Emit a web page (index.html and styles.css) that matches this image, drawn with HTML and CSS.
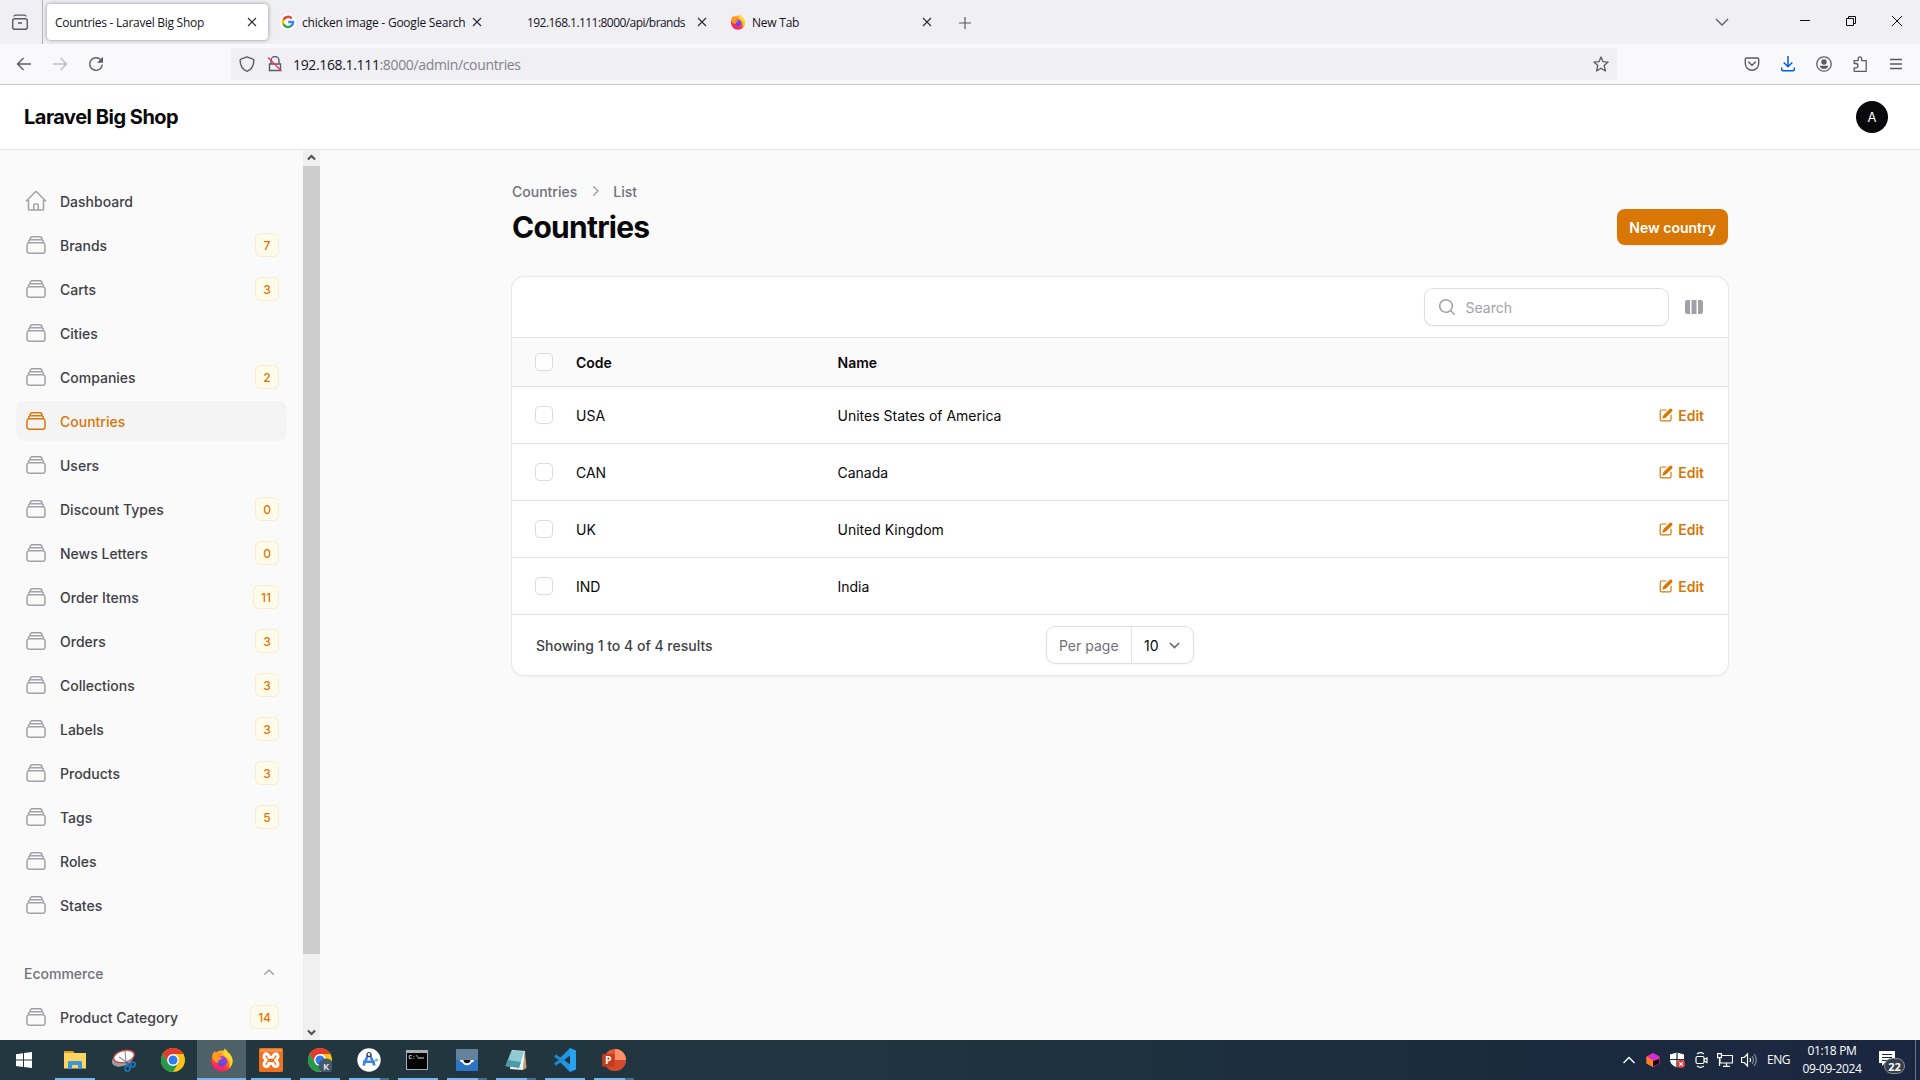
FILE: index.html
```html
<!DOCTYPE html>
<html lang="en">
<head>
<meta charset="utf-8">
<title>Countries - Laravel Big Shop</title>
<link rel="stylesheet" href="styles.css">
</head>
<body>
<svg class="defs" aria-hidden="true">
  <symbol id="stack" viewBox="0 0 24 24"><path fill="none" stroke="currentColor" stroke-width="1.5" stroke-linecap="round" stroke-linejoin="round" d="M6 6.878V6a2.25 2.25 0 0 1 2.25-2.25h7.5A2.25 2.25 0 0 1 18 6v.878m-12 0c.235-.083.487-.128.75-.128h10.5c.263 0 .515.045.75.128m-12 0A2.25 2.25 0 0 0 4.5 9v.878m13.5-3A2.25 2.25 0 0 1 19.5 9v.878m0 0a2.246 2.246 0 0 0-.75-.128H5.25c-.263 0-.515.045-.75.128m15 0A2.25 2.25 0 0 1 21 12v6a2.25 2.25 0 0 1-2.25 2.25H5.25A2.25 2.25 0 0 1 3 18v-6c0-.98.626-1.813 1.5-2.122"/></symbol>
  <symbol id="home" viewBox="0 0 24 24"><path fill="none" stroke="currentColor" stroke-width="1.5" stroke-linecap="round" stroke-linejoin="round" d="m2.25 12 8.954-8.955c.44-.439 1.152-.439 1.591 0L21.75 12M4.5 9.75v10.125c0 .621.504 1.125 1.125 1.125H9.75v-4.875c0-.621.504-1.125 1.125-1.125h2.25c.621 0 1.125.504 1.125 1.125V21h4.125c.621 0 1.125-.504 1.125-1.125V9.75M8.25 21h8.25"/></symbol>
  <symbol id="edit" viewBox="0 0 20 20"><path fill="currentColor" d="m5.433 13.917 1.262-3.155A4 4 0 0 1 7.58 9.42l6.92-6.918a2.121 2.121 0 0 1 3 3l-6.92 6.918c-.383.383-.84.685-1.343.886l-3.154 1.262a.5.5 0 0 1-.65-.65Z"/><path fill="currentColor" d="M3.5 5.75c0-.69.56-1.25 1.25-1.25H10A.75.75 0 0 0 10 3H4.75A2.75 2.75 0 0 0 2 5.75v9.5A2.75 2.75 0 0 0 4.75 18h9.5A2.75 2.75 0 0 0 17 15.25V10a.75.75 0 0 0-1.5 0v5.25c0 .69-.56 1.25-1.25 1.25h-9.5c-.69 0-1.25-.56-1.25-1.25v-9.5Z"/></symbol>
  <symbol id="close" viewBox="0 0 16 16"><path fill="none" stroke="#2b2a33" stroke-width="1.1" d="M4 4l8 8M12 4l-8 8"/></symbol>
  <symbol id="firefox" viewBox="0 0 24 24">
    <circle cx="12" cy="13" r="10.6" fill="url(#ffBody)"/>
    <path fill="#ffe226" d="M14.500.5c2.300 1.300 3.300 3 3.800 4.600 2.500 1.600 4.300 4.700 4.300 8 0 3-1.300 5.800-3.500 7.700 1.300-5.500-.2-10-4-11.800C13 7.500 13 3.500 14.500.5z" opacity=".85"/>
    <circle cx="12" cy="13.300" r="5.200" fill="url(#ffCore)"/>
    <path fill="#ff9a1f" d="M2 8.500C2.300 6 3.500 4 5.200 2.800c0 1.200.4 2 1.200 2.500 1.700-.4 3.400-.1 4.700.8-2.200.5-2.900 1.800-2.700 3l3.800.5c-.2 1.400-1.500 1.800-2.600 2.200-1.100.5-1.400 1.500-1 2.800C6 15.500 3 13 2 8.500z"/>
  </symbol>
  <symbol id="chrome" viewBox="0 0 24 24">
    <circle cx="12" cy="12" r="12" fill="#fbc116"/>
    <path fill="#e33b2e" d="M1.600 6A12 12 0 0 1 22.400 6H12v6L6.800 15z"/>
    <path fill="#229a4c" d="M1.600 6A12 12 0 0 0 12 24l5.200-9L12 12l-5.200 3z"/>
    <circle cx="12" cy="12" r="5.900" fill="#fff"/><circle cx="12" cy="12" r="4.500" fill="#2f7cf0"/>
  </symbol>
  <linearGradient id="ffBody" x1=".8" y1="0" x2=".3" y2="1"><stop offset="0" stop-color="#ffd43a"/><stop offset=".45" stop-color="#ff7a1f"/><stop offset=".75" stop-color="#ff3050"/><stop offset="1" stop-color="#f0187c"/></linearGradient>
  <linearGradient id="ffCore" x1="0" y1="0" x2="0" y2="1"><stop offset="0" stop-color="#a23ee8"/><stop offset="1" stop-color="#5a4ad9"/></linearGradient>
</svg>

<div class="tabbar">
  <div class="tabs-archive"><svg width="20" height="20" viewBox="0 0 20 20" fill="none" stroke="#5b5b66" stroke-width="1.400"><rect x="2.700" y="6.700" width="14.600" height="10.600" rx="2"/><path d="M4 4.600c0-1 .8-1.500 1.600-1.500h8.800c.8 0 1.600.5 1.600 1.500M8 11h4"/></svg></div>
  <div class="tab tab-active"><span class="tab-title t1">Countries - Laravel Big Shop</span><svg class="tab-close"><use href="#close"/></svg></div>
  <div class="tab"><svg class="tab-icon" viewBox="0 0 16 16"><circle cx="8" cy="8" r="8" fill="#fff"/><g fill="none" stroke-width="2.500"><path stroke="#ea4335" d="M3.500 5.700A5 5 0 0 1 11.700 4.500"/><path stroke="#fbbc05" d="M3.500 10.400a5 5 0 0 1 0-4.800"/><path stroke="#34a853" d="M11.400 11.700a5 5 0 0 1-7.900-1.400"/><path stroke="#4285f4" d="M8.200 8h4.900c.1 1.500-.5 2.800-1.800 3.800"/></g></svg><span class="tab-title t2">chicken image - Google Search</span><svg class="tab-close"><use href="#close"/></svg></div>
  <div class="tab"><span class="tab-icon"></span><span class="tab-title t3">192.168.1.111:8000/api/brands</span><svg class="tab-close"><use href="#close"/></svg></div>
  <div class="tab"><svg class="tab-icon"><use href="#firefox"/></svg><span class="tab-title t4">New Tab</span><svg class="tab-close"><use href="#close"/></svg></div>
  <div class="new-tab"><svg width="14" height="14" viewBox="0 0 14 14"><path stroke="#5b5b66" stroke-width="1.200" d="M7 1v12M1 7h12"/></svg></div>
  <div class="window-controls">
    <span class="wc-list"><svg width="14" height="14" viewBox="0 0 14 14"><path fill="none" stroke="#5b5b66" stroke-width="1.300" d="M1 4l6 6 6-6"/></svg></span>
    <span class="wc"><svg width="12" height="12" viewBox="0 0 12 12"><path stroke="#111" d="M1 5.500h10"/></svg></span>
    <span class="wc"><svg width="12" height="12" viewBox="0 0 12 12" fill="none" stroke="#111"><path d="M1.500 3.500h7v7h-7zM3.500 3.500v-2h7v7h-2"/></svg></span>
    <span class="wc"><svg width="12" height="12" viewBox="0 0 12 12"><path stroke="#111" d="M1 1l10 10M11 1L1 11"/></svg></span>
  </div>
</div>

<div class="navbar">
  <div class="nav-buttons">
    <svg viewBox="0 0 16 16"><path fill="none" stroke="#5b5b66" stroke-width="1.400" d="M15 8H1.500M7.500 2l-6 6 6 6"/></svg>
    <svg viewBox="0 0 16 16"><path fill="none" stroke="#bdbdc4" stroke-width="1.400" d="M1 8h13.500M8.500 2l6 6-6 6"/></svg>
    <svg viewBox="0 0 16 16"><path fill="none" stroke="#5b5b66" stroke-width="1.400" d="M14.300 8.500A6.300 6.300 0 1 1 12.500 3.600"/><path fill="#5b5b66" d="M15 .8v6H9z"/></svg>
  </div>
  <div class="urlbar">
    <svg class="i16" viewBox="0 0 16 16"><path fill="none" stroke="#5b5b66" stroke-width="1.400" stroke-linejoin="round" d="M8 .9l6 2.200c.6.200.9.600.9 1.100C14.800 10 12.500 13.500 8 15.300 3.500 13.500 1.200 10 1.100 4.200c0-.5.3-.9.900-1.100z"/></svg>
    <svg class="i16 lock" viewBox="0 0 16 16"><path fill="none" stroke="#5b5b66" stroke-width="1.400" d="M4 8V4.500a4 4 0 0 1 8 0V8M2.500 8h11v6.500h-11z"/><path stroke="#e8325c" stroke-width="1.300" d="M1 1.500l13.500 13.500"/></svg>
    <span class="url"><b>192.168.1.111</b>:8000/admin/countries</span>
    <svg class="i16 star" viewBox="0 0 16 16"><path fill="none" stroke="#5b5b66" stroke-width="1.300" stroke-linejoin="round" d="M8 1l2 4.700 5.100.4-3.900 3.400L12.400 15 8 12.200 3.600 15l1.200-5.500L.9 6.100 6 5.700z"/></svg>
  </div>
  <div class="nav-actions">
    <svg viewBox="0 0 16 16" fill="none" stroke="#5b5b66" stroke-width="1.400"><path d="M2.500 2h11c.7 0 1.200.500 1.200 1.200V7.500a6.700 6.700 0 0 1-13.400 0V3.200C1.300 2.500 1.800 2 2.500 2z"/><path d="M4.600 6L8 9.200 11.400 6" stroke-linecap="round"/></svg>
    <svg viewBox="0 0 16 16" fill="none" stroke="#0060df" stroke-width="1.500"><path d="M8 0v10.500M3.700 6.500L8 10.700l4.300-4.200M1.700 11.500v2c0 .7.500 1.200 1.200 1.200h10.200c.7 0 1.200-.5 1.200-1.200v-2"/></svg>
    <svg viewBox="0 0 16 16"><circle cx="8" cy="8" r="7.200" fill="none" stroke="#5b5b66" stroke-width="1.300"/><circle cx="8" cy="6" r="2.700" fill="#5b5b66"/><path fill="#5b5b66" d="M3.800 9.700h8.400c0 2-2 3.300-4.200 3.300s-4.200-1.300-4.200-3.300z"/></svg>
    <svg viewBox="0 0 16 16"><path fill="none" stroke="#5b5b66" stroke-width="1.300" stroke-linejoin="round" d="M2.200 7.500V4.600h4V2.500a1.700 1.700 0 0 1 3.400 0v2.100h4.600v10.700h-12v-3.500h1.600a2.100 2.100 0 0 0 0-4.300z"/></svg>
    <svg viewBox="0 0 16 16"><path stroke="#5b5b66" stroke-width="1.300" d="M2 3.500h12M2 8h12M2 12.500h12"/></svg>
  </div>
</div>

<header class="topbar"><span class="brand">Laravel Big Shop</span><span class="avatar">A</span></header>

<div class="layout">
  <aside class="sidebar">
    <nav class="menu">
      <ul>
        <li><svg><use href="#home"/></svg><span>Dashboard</span></li>
        <li><svg><use href="#stack"/></svg><span>Brands</span><em>7</em></li>
        <li><svg><use href="#stack"/></svg><span>Carts</span><em>3</em></li>
        <li><svg><use href="#stack"/></svg><span>Cities</span></li>
        <li><svg><use href="#stack"/></svg><span>Companies</span><em>2</em></li>
        <li class="active"><svg><use href="#stack"/></svg><span>Countries</span></li>
        <li><svg><use href="#stack"/></svg><span>Users</span></li>
        <li><svg><use href="#stack"/></svg><span>Discount Types</span><em>0</em></li>
        <li><svg><use href="#stack"/></svg><span>News Letters</span><em>0</em></li>
        <li><svg><use href="#stack"/></svg><span>Order Items</span><em>11</em></li>
        <li><svg><use href="#stack"/></svg><span>Orders</span><em>3</em></li>
        <li><svg><use href="#stack"/></svg><span>Collections</span><em>3</em></li>
        <li><svg><use href="#stack"/></svg><span>Labels</span><em>3</em></li>
        <li><svg><use href="#stack"/></svg><span>Products</span><em>3</em></li>
        <li><svg><use href="#stack"/></svg><span>Tags</span><em>5</em></li>
        <li><svg><use href="#stack"/></svg><span>Roles</span></li>
        <li><svg><use href="#stack"/></svg><span>States</span></li>
      </ul>
      <div class="group">
        <div class="group-label"><span>Ecommerce</span><svg viewBox="0 0 20 20"><path fill="#a1a1aa" d="M9.470 6.470a.75.75 0 0 1 1.060 0l4.250 4.250a.75.75 0 1 1-1.060 1.060L10 8.060l-3.720 3.720a.75.75 0 0 1-1.060-1.060l4.250-4.250Z"/></svg></div>
        <ul><li><svg><use href="#stack"/></svg><span>Product Category</span><em>14</em></li></ul>
      </div>
    </nav>
    <div class="scrollbar">
      <svg viewBox="0 0 17 17"><path fill="none" stroke="#505050" stroke-width="2.200" d="M4.700 10.200l3.800-3.800 3.800 3.800"/></svg>
      <div class="thumb"></div>
      <svg viewBox="0 0 17 17"><path fill="none" stroke="#505050" stroke-width="2.200" d="M4.700 6.800l3.800 3.800 3.800-3.800"/></svg>
    </div>
  </aside>

  <main class="main">
    <div class="page-header">
      <div>
        <div class="breadcrumbs"><span>Countries</span><svg viewBox="0 0 20 20"><path fill="#a1a1aa" d="M8.220 5.220a.75.75 0 0 1 1.060 0l4.250 4.250a.75.75 0 0 1 0 1.060l-4.250 4.250a.75.75 0 0 1-1.060-1.060L11.940 10 8.220 6.280a.75.75 0 0 1 0-1.060Z"/></svg><span>List</span></div>
        <h1>Countries</h1>
      </div>
      <button class="primary">New country</button>
    </div>

    <section class="card">
      <div class="toolbar">
        <div class="search"><svg viewBox="0 0 20 20"><path fill="#a1a1aa" fill-rule="evenodd" d="M9 3.500a5.500 5.500 0 1 0 0 11 5.500 5.500 0 0 0 0-11ZM2 9a7 7 0 1 1 12.452 4.391l3.328 3.329a.75.75 0 1 1-1.060 1.060l-3.329-3.328A7 7 0 0 1 2 9Z"/></svg><span>Search</span></div>
        <svg class="columns" viewBox="0 0 20 20"><path fill="#a1a1aa" d="M14 17h2.750A2.250 2.250 0 0 0 19 14.750v-9.500A2.250 2.250 0 0 0 16.750 3H14v14ZM12.500 3h-5v14h5V3ZM3.250 3H6v14H3.250A2.250 2.250 0 0 1 1 14.750v-9.500A2.250 2.250 0 0 1 3.250 3Z"/></svg>
      </div>
      <div class="row head"><i class="check"></i><span>Code</span><span>Name</span></div>
      <div class="row"><i class="check"></i><span>USA</span><span>Unites States of America</span><a><svg><use href="#edit"/></svg><span>Edit</span></a></div>
      <div class="row"><i class="check"></i><span>CAN</span><span>Canada</span><a><svg><use href="#edit"/></svg><span>Edit</span></a></div>
      <div class="row"><i class="check"></i><span>UK</span><span>United Kingdom</span><a><svg><use href="#edit"/></svg><span>Edit</span></a></div>
      <div class="row"><i class="check"></i><span>IND</span><span>India</span><a><svg><use href="#edit"/></svg><span>Edit</span></a></div>
      <div class="footer">
        <span class="summary">Showing 1 to 4 of 4 results</span>
        <div class="per-page"><span class="label">Per page</span><span class="value">10<svg viewBox="0 0 20 20"><path fill="none" stroke="#6b7280" stroke-width="1.500" stroke-linecap="round" stroke-linejoin="round" d="m6 8 4 4 4-4"/></svg></span></div>
      </div>
    </section>
  </main>
</div>

<div class="taskbar">
  <div class="task plain"><svg width="16" height="16" viewBox="0 0 16 16"><path fill="#fff" d="M0 2.200l7-1v6.400H0zM8 1.100L16 0v7.600H8zM0 8.500h7v6.400l-7-1zM8 8.500h8V16l-8-1.100z"/></svg></div>
  <div class="task open"><svg viewBox="0 0 24 24"><path fill="#e3a21a" d="M1 3h9l2 2.500H1z"/><path fill="#fcd462" d="M1 5h22v15.500H1z"/><path fill="#3b97dc" d="M5 14.500c0-1 .6-1.500 1.500-1.500h11c.9 0 1.500.5 1.500 1.500V21h-4v-4H9v4H5z"/></svg></div>
  <div class="task"><svg viewBox="0 0 24 24"><ellipse cx="10.500" cy="11.500" rx="11" ry="6.500" fill="#9a9fa5" transform="rotate(-20 10.500 11.500)"/><ellipse cx="12" cy="8.500" rx="10.500" ry="5.800" fill="#fff" stroke="#d84a44" stroke-width="1.400" transform="rotate(-14 12 8.500)"/><path stroke="#8a949c" stroke-width="1.200" d="M13 3l1 12M7 9l9 6"/><g fill="none" stroke="#1b76bd" stroke-width="1.700"><circle cx="15.500" cy="20.500" r="2.500"/><circle cx="20.800" cy="16.500" r="2.300"/><path d="M15.500 18l-.5-4M18.500 16l-5-1"/></g></svg></div>
  <div class="task"><svg><use href="#chrome"/></svg></div>
  <div class="task current"><svg><use href="#firefox"/></svg></div>
  <div class="task open"><svg viewBox="0 0 24 24"><rect width="24" height="24" rx="1.500" fill="#ef701d"/><path fill="#f6a268" d="M1 1h22v3H1z" opacity=".6"/><path fill="none" stroke="#fff" stroke-width="3" stroke-linejoin="round" d="M10 9.300C9.500 4.700 5 5 5 8.600c0 2.200 2 2.700 2.300 3.700C7 13.300 5 14 5 16c0 3.600 4.500 3.500 5-.5h4c.5 4 5 4 5 .5 0-2-2-2.700-2.300-3.700.3-1 2.300-1.500 2.300-3.700 0-3.600-4.500-3.900-5 .7z"/></svg></div>
  <div class="task open"><svg viewBox="0 0 24 24"><use href="#chrome" width="24" height="24"/><circle cx="18" cy="18" r="7.500" fill="#45596a"/><text x="18" y="21.500" class="badge-k">K</text></svg></div>
  <div class="task open multi"><svg viewBox="0 0 24 24"><circle cx="12" cy="12" r="11.700" fill="#fff"/><path fill="none" stroke="#3f82ee" stroke-width="2.600" d="M11 7L6.500 17.500M13 7l4.500 10.500M6 13.800h12"/><circle cx="12" cy="6.500" r="2" fill="#fff" stroke="#263a4a" stroke-width="1.200"/><circle cx="19.500" cy="12" r="1.500" fill="#58d17e"/></svg></div>
  <div class="task open"><svg viewBox="0 0 24 24"><path fill="#a9afb3" d="M0 2h22v20H0z"/><path fill="#050505" d="M1 5h20v16H1z"/><text x="2.500" y="10.500" class="prompt">C:\</text><path stroke="#ddd" d="M13 10h5"/></svg></div>
  <div class="task open multi"><svg viewBox="0 0 24 24"><path fill="#64839a" d="M1 1h22v12H1z"/><path fill="#2b74c6" d="M1 12h22v11H1z"/><path fill="#fff" d="M5 12h14c0 2.400-2 2-2.500 2.600C15.500 18 8.500 18 7.500 14.600 7 14 5 14.400 5 12z"/><path fill="#10151a" d="M8.500 12h7c0 4.300-7 4.300-7 0z"/></svg></div>
  <div class="task open multi"><svg viewBox="0 0 24 24"><path fill="#cda262" d="M21 4l1.500 16-3.500 2z"/><path fill="#eef2f2" d="M8 2l13 1-2 19-13-1z"/><path fill="#8fc9d3" d="M7.500 2.500L20 3.500 15 20 1.500 18z"/><path fill="#4c9aa8" d="M4 12l13 2-2 6-13.500-2z"/></svg></div>
  <div class="task open"><svg viewBox="0 0 24 24"><path fill="none" stroke="#1c86cf" stroke-width="3" stroke-linejoin="round" d="M18 19L2 7.500M18 5L2 16.500"/><path fill="#2196e0" d="M17 0L6 11l3 2.500L17 7zM17 24L6 13l3-2.500L17 17z"/><path fill="#28a2ec" d="M17 0l6 2.500v19L17 24z"/></svg></div>
  <div class="task open multi"><svg viewBox="0 0 24 24"><circle cx="13" cy="12" r="11" fill="#e1593a"/><path fill="#ff8f6b" d="M13 1a11 11 0 0 1 11 11H13z"/><path fill="#c93f20" d="M2 12h22a11 11 0 0 1-22 0z" opacity=".55"/><rect y="6" width="12.500" height="12.500" rx="1" fill="#c33b1d"/><text x="6.200" y="16" class="ppt">P</text></svg></div>
  <div class="tray">
    <span class="tray-i"><svg viewBox="0 0 16 16"><path fill="none" stroke="#fff" stroke-width="1.400" d="M2.500 11L8 5.500l5.500 5.500"/></svg></span>
    <span class="tray-i"><svg viewBox="0 0 16 16"><path fill="#ff318c" d="M8 1l6.500 3.500v7L8 15l-6.500-3.500v-7z"/><path fill="#fd8224" d="M1.500 4.500L8 8v7l-6.500-3.500z"/><path fill="#b72bff" d="M8 1l6.500 3.500L8 8 4 6z" opacity=".75"/><path fill="#0b0b10" d="M8 9l6-2v4.500L8 14.500z"/></svg></span>
    <span class="tray-i"><svg viewBox="0 0 16 16"><path fill="#fff" d="M1 2.500L8 .5l7 2v5c0 4-3 6.500-7 8-4-1.500-7-4-7-8z"/><path stroke="#1c2a42" stroke-width="1.200" d="M8 0v16M0 7.500h16"/><circle cx="12" cy="12" r="4.300" fill="#e23a3a"/><path stroke="#fff" stroke-width="1.200" d="M10.200 10.200l3.600 3.600M13.800 10.200l-3.600 3.600"/></svg></span>
    <span class="tray-i"><svg viewBox="0 0 16 16"><g fill="none" stroke="#fff" stroke-width="1.200"><rect x="3" y="4.500" width="8" height="7" rx="1.500"/><path d="M11 7.500l3-1.500v4.500L11 9M4 2c2-1.500 5-1.500 7 0M4 14c2 1.500 5 1.500 7 0"/></g></svg></span>
    <span class="tray-i"><svg viewBox="0 0 16 16"><path fill="none" stroke="#fff" stroke-width="1.200" d="M5 3.500h10.500V11H3V7M9.500 11v3M6 14.300h7M.6 1.600h3.800v4H.6zM2.500 5.500V14"/></svg></span>
    <span class="tray-i"><svg viewBox="0 0 16 16"><path fill="none" stroke="#fff" stroke-width="1.200" d="M.5 5.500h2.700L6.500 2v12l-3.300-3.500H.5zM8.800 6c.9 1.200.9 2.800 0 4"/><path fill="none" stroke="#8791a3" stroke-width="1.200" d="M11 4c1.800 2.400 1.800 5.600 0 8M13.200 2c2.500 3.600 2.500 8.400 0 12"/></svg></span>
    <span class="lang">ENG</span>
    <span class="clock"><span>01:18 PM</span><span>09-09-2024</span></span>
    <span class="notes"><svg width="28" height="28" viewBox="0 0 28 28"><path fill="#fff" d="M1 2h16v12H7l-3 3v-3H1z"/><path stroke="#1c2a42" d="M4 5.500h10M4 8.500h10M4 11.500h7"/><rect x="6.500" y="9.500" width="20" height="15" rx="7.500" fill="#35404a" stroke="#858d96"/><text x="16.500" y="21.500" class="count">22</text></svg></span>
    <span class="peek"></span>
  </div>
</div>
</body>
</html>
```
FILE: styles.css
```css
* { box-sizing: border-box; }
body { margin: 0; width: 1920px; height: 1080px; overflow: hidden; display: flex; flex-direction: column; background: #fafafa; font-family: Inter, sans-serif; font-size: 14px; line-height: 20px; color: #09090b; }
svg { display: block; flex: none; }
.defs { position: absolute; width: 0; height: 0; }

/* browser tabs */
.tabbar { height: 44px; flex: none; display: flex; align-items: center; background: #f0eff4; font-family: "Open Sans", "Noto Sans", sans-serif; font-size: 12px; color: #15141a; }
.tabs-archive { width: 43px; height: 44px; padding: 12px 0 0 10px; border-right: 1px solid #b4b4ba; margin-right: 4px; }
.tab { width: 221px; height: 36px; margin-right: 4px; padding: 0 8px; display: flex; align-items: center; border-radius: 4px; }
.tab-active { background: #fff; box-shadow: 0 0 4px rgba(0, 0, 0, .4); }
.tab-icon { width: 16px; height: 16px; margin-right: 6px; flex: none; }
.tab-title { white-space: nowrap; padding-top: 2px; }
.t1 { letter-spacing: -.27px; }
.t2 { letter-spacing: -.23px; }
.t3 { letter-spacing: -.55px; }
.t4 { letter-spacing: -.23px; }
.tab-close { width: 16px; height: 16px; margin-left: auto; }
.new-tab { width: 30px; margin-left: 3px; display: flex; justify-content: center; padding-top: 1px; }
.window-controls { margin-left: auto; display: flex; }
.wc-list { width: 46px; display: flex; justify-content: center; margin-right: 37px; }
.wc { width: 46px; display: flex; justify-content: center; }

/* address bar */
.navbar { height: 41px; flex: none; display: flex; align-items: center; background: #f9f9fb; border-bottom: 1px solid #c9c9cd; }
.nav-buttons { width: 231px; padding-left: 16px; display: flex; gap: 20px; }
.nav-buttons svg, .nav-actions svg, .i16 { width: 16px; height: 16px; }
.urlbar { width: 1386px; height: 32px; padding: 0 8px; display: flex; align-items: center; background: #f0eff4; border-radius: 4px; }
.lock { margin-left: 12px; }
.url { margin-left: 10px; padding-top: 2px; font-family: "Open Sans", "Noto Sans", sans-serif; font-size: 14px; letter-spacing: -.35px; color: #83828a; }
.url b { font-weight: 400; color: #15141a; }
.star { margin-left: auto; }
.nav-actions { margin-left: auto; padding-right: 16px; display: flex; gap: 20px; }

/* application header */
.topbar { height: 65px; flex: none; padding: 0 32px 0 24px; display: flex; align-items: center; justify-content: space-between; background: #fff; border-bottom: 1px solid #e6e6e7; }
.brand { font-size: 20px; line-height: 25px; font-weight: 700; letter-spacing: -.5px; }
.avatar { width: 32px; height: 32px; border-radius: 50%; background: #09090b; color: #fff; display: flex; align-items: center; justify-content: center; font-size: 13px; }

.layout { height: 890px; flex: none; display: flex; }

/* sidebar */
.sidebar { width: 320px; display: flex; overflow: hidden; }
.menu { width: 303px; padding: 31px 16px 0; display: flex; flex-direction: column; gap: 28px; }
.menu ul { margin: 0; padding: 0; list-style: none; display: flex; flex-direction: column; gap: 4px; }
.menu li { height: 40px; padding: 0 8px; display: flex; align-items: center; gap: 12px; border-radius: 8px; font-weight: 500; color: #3f3f46; }
.menu li svg { width: 24px; height: 24px; color: #a1a1aa; }
.menu li span { flex: 1; padding-top: 2px; }
.menu li em { min-width: 24px; height: 24px; padding: 0 8px; border-radius: 6px; background: #fffbeb; box-shadow: inset 0 0 0 1px #fbeccf; color: #d97706; font-style: normal; font-size: 12px; line-height: 25px; text-align: center; }
.menu .active { background: #f4f4f5; }
.menu .active span, .menu .active svg { color: #d97706; }
.group { display: flex; flex-direction: column; gap: 4px; }
.group-label { height: 40px; padding: 0 8px; display: flex; align-items: center; justify-content: space-between; font-weight: 500; color: #71717a; }
.group-label span { padding-top: 2px; }
.group-label svg { width: 20px; height: 20px; }
.scrollbar { width: 17px; background: #f0f0f0; display: flex; flex-direction: column; justify-content: space-between; }
.scrollbar svg { width: 17px; height: 16px; }
.thumb { height: 788px; margin-bottom: auto; background: #cdcdcd; }

/* page */
.main { width: 1280px; margin: 0 auto; padding: 31px 32px; display: flex; flex-direction: column; gap: 32px; }
.page-header { display: flex; align-items: flex-end; justify-content: space-between; }
.breadcrumbs { display: flex; gap: 8px; margin-bottom: 8px; font-weight: 500; color: #71717a; height: 20px; line-height: 22px; }
.breadcrumbs svg { width: 20px; height: 20px; }
h1 { margin: 0; font-size: 30px; line-height: 36px; font-weight: 700; letter-spacing: -.75px; }
.primary { height: 36px; padding: 1px 12px 0; border: 0; border-radius: 8px; background: #d97706; color: #fff; font: 600 14px/20px Inter, sans-serif; box-shadow: 0 1px 2px rgba(0, 0, 0, .05); }

.card { background: #fff; border-radius: 12px; box-shadow: 0 0 0 1px #e8e8e9, 0 1px 3px rgba(0, 0, 0, .06); }
.toolbar { height: 60px; padding: 0 24px; display: flex; align-items: center; justify-content: flex-end; gap: 16px; }
.search { width: 243px; height: 36px; padding: 0 12px; border-radius: 8px; box-shadow: 0 0 0 1px #dededf, 0 1px 2px 1px rgba(0, 0, 0, .04); display: flex; align-items: center; gap: 8px; color: #a1a1aa; }
.search span { padding: 1px 0 0 .5px; }
.search svg, .columns { width: 20px; height: 20px; }
.row { height: 57px; padding: 0 24px; border-top: 1px solid #e4e4e7; display: grid; grid-template-columns: 40px 261.5px 1fr auto; align-items: center; }
.row span { padding-top: 2px; }
.head { height: 49px; background: #fafafa; font-weight: 600; }
.check { width: 16px; height: 16px; border-radius: 4px; background: #fff; box-shadow: 0 0 0 1px #dcdcdd, 0 1px 2px rgba(0, 0, 0, .05); }
.row a { display: flex; align-items: center; gap: 4px; color: #d97706; font-weight: 600; }
.row a svg { width: 16px; height: 16px; }
.footer { height: 61px; padding: 0 24px; border-top: 1px solid #e4e4e7; display: grid; grid-template-columns: 1fr auto 1fr; align-items: center; }
.summary { font-weight: 500; color: #3f3f46; padding-top: 1px; }
.per-page { width: 146px; height: 36px; border-radius: 8px; box-shadow: 0 0 0 1px #dededf, 0 1px 2px 1px rgba(0, 0, 0, .04); display: flex; }
.per-page .label { width: 85px; padding: 9px 0 0 12px; border-right: 1px solid #e4e4e7; color: #71717a; }
.per-page .value { flex: 1; padding: 1px 8px 0 12px; display: flex; align-items: center; justify-content: space-between; }
.per-page svg { width: 21px; height: 21px; }

/* taskbar */
.taskbar { height: 40px; flex: none; display: flex; background: linear-gradient(90deg, #22373f 0%, #20353f 45%, #1b2c3e 75%, #1b2640 100%); color: #fff; }
.task { width: 49px; height: 40px; padding-bottom: 1px; display: flex; align-items: center; justify-content: center; background-repeat: no-repeat; background-position: 50% 100%; }
.task > svg { width: 24px; height: 24px; }
.task.plain { width: 50px; padding: 0 2px 0 0; }
.task.plain > svg { width: 16px; height: 16px; }
.open { background-image: linear-gradient(#76b9ed, #76b9ed); background-size: 40px 2px; }
.multi { background-image: linear-gradient(90deg, #76b9ed 31px, #466f91 31px); }
.current { background: linear-gradient(#76b9ed, #76b9ed) 50% 100% / 100% 2px no-repeat #4e6168; }
.badge-k { font: 600 9px "Open Sans", sans-serif; fill: #fff; text-anchor: middle; }
.prompt { font: 700 6px "Liberation Mono", monospace; fill: #ddd; }
.ppt { font: 700 10.5px "Open Sans", sans-serif; fill: #fff; text-anchor: middle; }
.count { font: 700 11px "Open Sans", sans-serif; fill: #fff; text-anchor: middle; }
.tray { margin-left: auto; display: flex; align-items: center; font-family: "Open Sans", "Noto Sans", sans-serif; font-size: 12px; }
.tray-i { width: 24px; display: flex; justify-content: center; }
.tray-i svg { width: 16px; height: 16px; }
.lang { width: 35px; text-align: center; letter-spacing: -.4px; }
.clock { width: 72px; display: flex; flex-direction: column; text-align: center; line-height: 18px; letter-spacing: -.35px; }
.notes { width: 47px; padding: 5px 0 0 10px; }
.peek { width: 5px; height: 40px; border-left: 1px solid #6c7688; }
```
